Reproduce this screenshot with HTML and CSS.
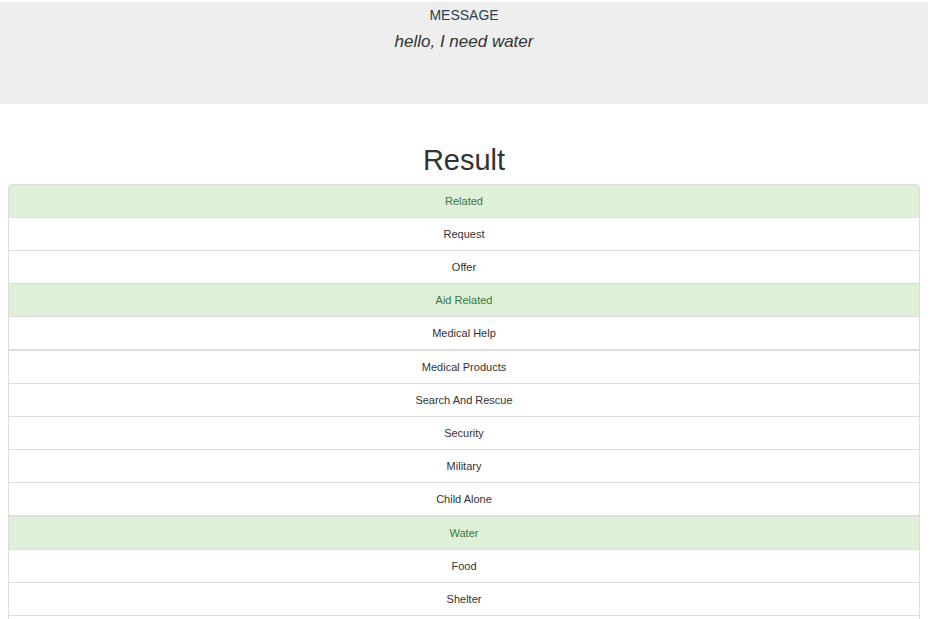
FILE: index.html
```html
<!DOCTYPE html>
<html lang="en">
<head>
  <meta charset="UTF-8">
  <meta name="viewport" content="width=device-width, initial-scale=1.0">
  <title>Disaster Response - Result</title>
  <link rel="stylesheet" href="styles.css">
</head>
<body>
  <div class="page">
    <!-- Message -->
    <div class="jumbotron">
      <div class="message-label">MESSAGE</div>
      <div class="message-text">hello, I need water</div>
    </div>

    <!-- Result -->
    <h1 class="result-title">Result</h1>
    <ul class="list-group">
      <li class="list-item success">Related</li>
      <li class="list-item">Request</li>
      <li class="list-item">Offer</li>
      <li class="list-item success">Aid Related</li>
      <li class="list-item split">Medical Help</li>
      <li class="list-item">Medical Products</li>
      <li class="list-item">Search And Rescue</li>
      <li class="list-item">Security</li>
      <li class="list-item">Military</li>
      <li class="list-item split">Child Alone</li>
      <li class="list-item success">Water</li>
      <li class="list-item">Food</li>
      <li class="list-item">Shelter</li>
      <li class="list-item">Clothing</li>
    </ul>
  </div>
</body>
</html>
```

FILE: styles.css
```css
/* General */
body {
  margin: 0;
  padding: 0;
  font-family: "Liberation Sans", Arial, sans-serif;
  color: #333;
  background-color: #fff;
}

.page {
  width: 928px;
}

/* Message box */
.jumbotron {
  margin-top: 2px;
  height: 102px;
  box-sizing: border-box;
  padding-top: 3px;
  background-color: #eee;
  text-align: center;
}

.message-label {
  font-size: 14px;
  line-height: 20px;
  color: #2c3e50;
}

.message-text {
  margin-top: 5px;
  font-size: 17px;
  line-height: 24px;
  font-style: italic;
  color: #333;
}

/* Result */
.result-title {
  margin: 38px 0 6px;
  font-size: 29px;
  line-height: 36px;
  font-weight: normal;
  text-align: center;
}

.list-group {
  list-style: none;
  margin: 0 8px;
  padding: 0;
  border: 1px solid #ddd;
  border-radius: 4px;
  overflow: hidden;
}

.list-item {
  height: 32px;
  line-height: 32px;
  font-size: 11px;
  text-align: center;
  color: #333;
  background-color: #fff;
  border-bottom: 1px solid #ddd;
}

.list-item:last-child {
  border-bottom: none;
}

.list-item.split {
  border-bottom-width: 2px;
}

.list-item.success {
  background-color: #dff0d8;
  color: #3c763d;
}
```
